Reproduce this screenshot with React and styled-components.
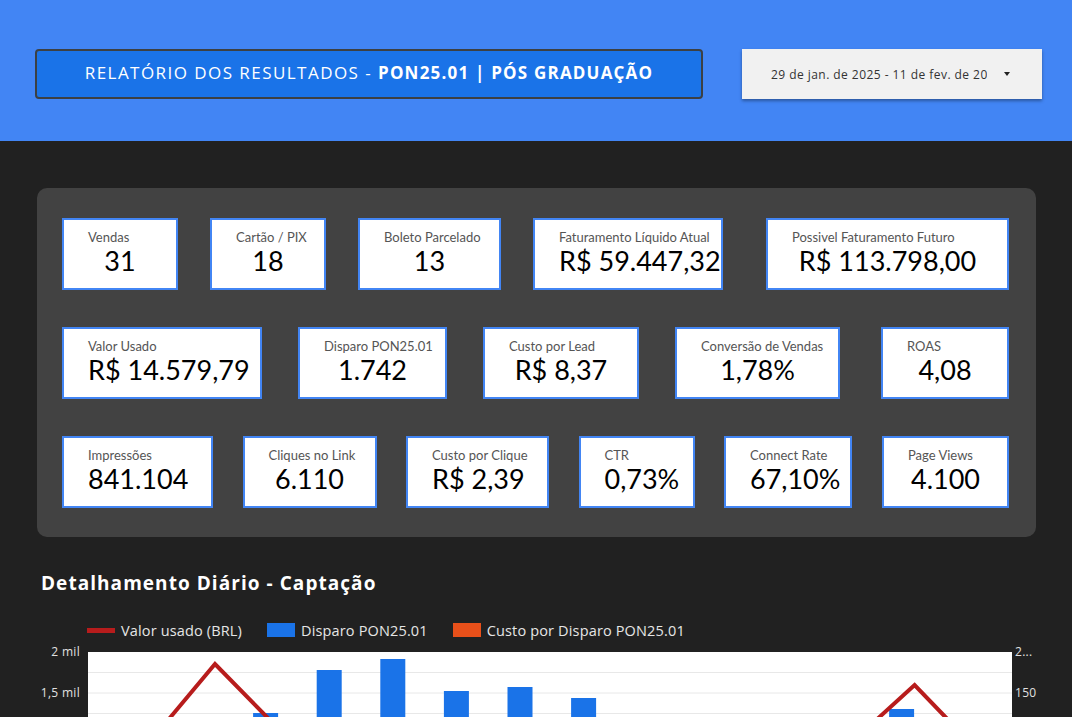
import React from "react";
import styled, { createGlobalStyle } from "styled-components";

const GlobalStyle = createGlobalStyle`
  html, body {
    margin: 0;
    padding: 0;
    background: #212121;
    overflow: hidden;
  }
  * {
    box-sizing: border-box;
  }
`;

const Page = styled.div`
  width: 1072px;
  min-height: 717px;
  background: #212121;
  font-family: "Open Sans", "Liberation Sans", sans-serif;
`;

const Header = styled.header`
  height: 141px;
  background: #4285f4;
  display: flex;
  align-items: flex-start;
  gap: 39px;
  padding: 49px 0 0 35px;
`;

const TitleBox = styled.div`
  width: 668px;
  height: 50px;
  background: #1a73e8;
  border: 2px solid #3c4043;
  border-radius: 4px;
  display: flex;
  align-items: center;
  justify-content: center;
  color: #fff;
  font-size: 17px;
  letter-spacing: 1.45px;
  padding-bottom: 4px;

  b {
    font-weight: 700;
    letter-spacing: 1.2px;
  }
`;

const DateBox = styled.div`
  width: 300px;
  height: 50px;
  background: #f1f1f1;
  box-shadow: 0 2px 3px rgba(0, 0, 0, 0.35);
  display: flex;
  align-items: center;
  padding-left: 29px;
  color: #333;
  font-size: 12px;
  letter-spacing: 0.45px;
`;

const DateText = styled.span`
  width: 216px;
  overflow: hidden;
  white-space: nowrap;
`;

const Caret = styled.span`
  margin-left: 17px;
  width: 0;
  height: 0;
  border-left: 3.5px solid transparent;
  border-right: 3.5px solid transparent;
  border-top: 4px solid #222;
`;

const Main = styled.main`
  padding: 47px 36px 0 37px;
`;

const Panel = styled.section`
  width: 999px;
  height: 349px;
  background: #424242;
  border-radius: 10px;
  padding: 30px 27px 28px 25px;
  display: flex;
  flex-direction: column;
  gap: 37px;
`;

const Row = styled.div`
  display: flex;
  gap: ${({ $gap }) => $gap}px;
`;

const Card = styled.div`
  width: ${({ $w }) => $w}px;
  height: 72px;
  flex: none;
  background: #fff;
  border: 2px solid #4285f4;
  padding-top: 9px;
  margin-left: ${({ $push }) => ($push ? "auto" : "0")};
  font-family: Lato, "Open Sans", sans-serif;
`;

const Label = styled.div`
  padding-left: 24px;
  font-size: 13px;
  line-height: 16px;
  color: #555;
  white-space: nowrap;
`;

const Value = styled.div`
  padding: 0 24px;
  font-size: 27px;
  line-height: 32px;
  color: #000;
  text-align: center;
  white-space: nowrap;
`;

const ChartTitle = styled.h2`
  margin: 34px 0 0 4px;
  font-size: 19px;
  font-weight: 700;
  letter-spacing: 1.05px;
  color: #fff;
  line-height: 24px;
`;

const Legend = styled.div`
  display: flex;
  align-items: center;
  gap: 25px;
  margin: 24px 0 0 50px;
  height: 22px;
  color: #e6e6e6;
  font-size: 14.5px;
  letter-spacing: 0.15px;
`;

const LegendItem = styled.div`
  display: flex;
  align-items: center;
  gap: 6px;
`;

const Swatch = styled.span`
  width: 28px;
  height: ${({ $line }) => ($line ? 5 : 14)}px;
  background: ${({ $color }) => $color};
`;

const ChartRow = styled.div`
  display: flex;
  margin-top: 11px;
`;

const Axis = styled.div`
  width: ${({ $w }) => $w}px;
  display: flex;
  flex-direction: column;
  gap: 25px;
  margin-top: -8px;
  padding: ${({ $right }) => ($right ? "0 0 0 3px" : "0 8px 0 0")};
  text-align: ${({ $right }) => ($right ? "left" : "right")};
  color: #e0e0e0;
  font-size: 12px;
  line-height: 16px;
  letter-spacing: 0.3px;
`;

const Plot = styled.div`
  width: 924px;
  height: 190px;
  background: #fff;

  svg {
    display: block;
  }
`;

const row1 = [
  { label: "Vendas", value: "31", w: 116 },
  { label: "Cartão / PIX", value: "18", w: 116 },
  { label: "Boleto Parcelado", value: "13", w: 143 },
  { label: "Faturamento Líquido Atual", value: "R$ 59.447,32", w: 190 },
  { label: "Possivel Faturamento Futuro", value: "R$ 113.798,00", w: 243 },
];

const row2 = [
  { label: "Valor Usado", value: "R$ 14.579,79", w: 200 },
  { label: "Disparo PON25.01", value: "1.742", w: 149 },
  { label: "Custo por Lead", value: "R$ 8,37", w: 156 },
  { label: "Conversão de Vendas", value: "1,78%", w: 165 },
  { label: "ROAS", value: "4,08", w: 128 },
];

const row3 = [
  { label: "Impressões", value: "841.104", w: 151 },
  { label: "Cliques no Link", value: "6.110", w: 134 },
  { label: "Custo por Clique", value: "R$ 2,39", w: 143 },
  { label: "CTR", value: "0,73%", w: 116 },
  { label: "Connect Rate", value: "67,10%", w: 128 },
  { label: "Page Views", value: "4.100", w: 127 },
];

// y of each day, relative to the plot top (164 = zero)
const disparo = [120, 110, 61, 18, 7, 39, 35, 46, 95, 88, 100, 105, 57, 92];
const custo = [160, 161, 160, 161, 162, 161, 160, 161, 159, 160, 161, 160, 161, 160];
const valor = [88, 12, 77, 110, 120, 105, 115, 125, 130, 118, 112, 91, 33, 99];

const bandX = (i) => 63.4 + 63.6 * i;

const StatRow = ({ items, gap }) => (
  <Row $gap={gap}>
    {items.map((c, i) => (
      <Card key={c.label} $w={c.w} $push={i === items.length - 1}>
        <Label>{c.label}</Label>
        <Value>{c.value}</Value>
      </Card>
    ))}
  </Row>
);

const DailyChart = () => (
  <svg width="924" height="190" viewBox="0 0 924 190">
    {[20.5, 41, 61.5, 82, 102.5, 123, 143.5].map((y) => (
      <line key={y} x1="0" x2="924" y1={y} y2={y} stroke="#e8e8e8" strokeWidth="1" />
    ))}
    {disparo.map((y, i) => (
      <rect key={"d" + i} x={bandX(i) - 25.5} y={y} width="25" height={164 - y} fill="#1a73e8" />
    ))}
    {custo.map((y, i) => (
      <rect key={"c" + i} x={bandX(i) + 0.5} y={y} width="25" height={164 - y} fill="#e8501a" />
    ))}
    <polyline
      points={valor.map((y, i) => `${bandX(i)},${y}`).join(" ")}
      fill="none"
      stroke="#b71c1c"
      strokeWidth="4"
      strokeLinejoin="miter"
    />
  </svg>
);

export default function App() {
  return (
    <Page>
      <GlobalStyle />
      <Header>
        <TitleBox>
          <span>
            RELATÓRIO DOS RESULTADOS - <b>PON25.01 | PÓS GRADUAÇÃO</b>
          </span>
        </TitleBox>
        <DateBox>
          <DateText>29 de jan. de 2025 - 11 de fev. de 2025</DateText>
          <Caret />
        </DateBox>
      </Header>

      <Main>
        <Panel>
          <StatRow items={row1} gap={32} />
          <StatRow items={row2} gap={36} />
          <StatRow items={row3} gap={29.5} />
        </Panel>

        <ChartTitle>Detalhamento Diário - Captação</ChartTitle>

        <Legend>
          <LegendItem>
            <Swatch $line $color="#b71c1c" />
            Valor usado (BRL)
          </LegendItem>
          <LegendItem>
            <Swatch $color="#1a73e8" />
            Disparo PON25.01
          </LegendItem>
          <LegendItem>
            <Swatch $color="#e8501a" />
            Custo por Disparo PON25.01
          </LegendItem>
        </Legend>

        <ChartRow>
          <Axis $w={51}>
            <span>2 mil</span>
            <span>1,5 mil</span>
            <span>1 mil</span>
            <span>500</span>
          </Axis>
          <Plot>
            <DailyChart />
          </Plot>
          <Axis $w={23} $right>
            <span>2...</span>
            <span>150</span>
            <span>100</span>
            <span>50</span>
          </Axis>
        </ChartRow>
      </Main>
    </Page>
  );
}
